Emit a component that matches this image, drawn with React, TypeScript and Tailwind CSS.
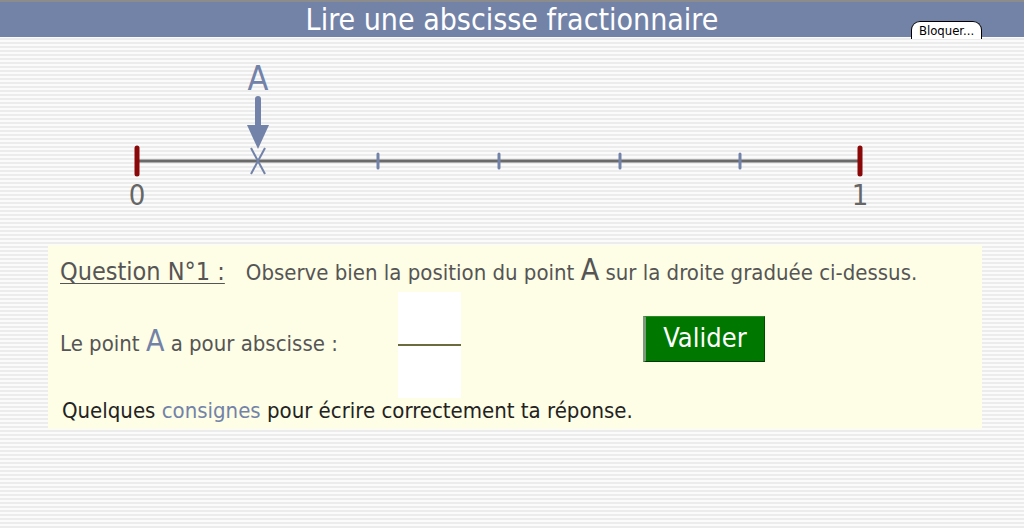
import React from "react";

const ticks = [378, 499, 620, 740];
const font = "'DejaVu Sans Condensed', 'DejaVu Sans', sans-serif";

const NumberLine = () => (
  <svg width="1024" height="208" viewBox="0 36 1024 208" className="block">
    {/* point A label and arrow */}
    <text x="258" y="89" textAnchor="middle" fontSize="34" fill="#7282a8" fontFamily={font}>
      A
    </text>
    <line x1="258" y1="98" x2="258" y2="128" stroke="#7282a8" strokeWidth="6" strokeLinecap="round" />
    <polygon points="247,124 269,124 258,148" fill="#7282a8" />

    {/* axis */}
    <line x1="137" y1="160" x2="860" y2="160" stroke="#6a6a6a" strokeWidth="3" />
    {ticks.map((x) => (
      <line key={x} x1={x} y1="153" x2={x} y2="167" stroke="#7282a8" strokeWidth="3" strokeLinecap="round" />
    ))}
    {/* cross at A */}
    <line x1="251" y1="147" x2="265" y2="173" stroke="#7282a8" strokeWidth="2" />
    <line x1="265" y1="147" x2="251" y2="173" stroke="#7282a8" strokeWidth="2" />

    {/* ends */}
    <line x1="137" y1="147" x2="137" y2="173" stroke="#8a0808" strokeWidth="5" strokeLinecap="round" />
    <line x1="860" y1="147" x2="860" y2="173" stroke="#8a0808" strokeWidth="5" strokeLinecap="round" />
    <text x="137" y="204" textAnchor="middle" fontSize="29" fill="#666" fontFamily={font}>
      0
    </text>
    <text x="860" y="204" textAnchor="middle" fontSize="29" fill="#666" fontFamily={font}>
      1
    </text>
  </svg>
);

export default function App() {
  return (
    <div className="relative h-[528px] w-[1024px] overflow-hidden bg-[repeating-linear-gradient(to_bottom,#fbfbfb_0px,#fbfbfb_2px,#ececec_2px,#ececec_4px)] font-['DejaVu_Sans_Condensed','DejaVu_Sans',sans-serif] font-stretch-condensed">
      {/* header */}
      <div className="relative flex h-[37px] items-center justify-center border-t-2 border-[#8c8c8c] bg-[#7383a7]">
        <h1 className="text-[30px] leading-none text-white">Lire une abscisse fractionnaire</h1>
        <button className="absolute left-[911px] top-[19px] h-[18px] w-[71px] rounded-t-[9px] border border-b-0 border-black bg-white text-[13px] leading-[16px] text-black">
          Bloquer...
        </button>
      </div>

      <NumberLine />

      {/* question panel */}
      <div className="ml-[48px] flex h-[184px] w-[934px] flex-col bg-[#fefde5] pl-[12px] text-[22px] text-[#555]">
        <div className="mt-[10px] flex h-[30px] items-baseline">
          <span className="text-[25px] leading-[30px] underline decoration-1 underline-offset-[3px]">Question N°1 :</span>
          <span className="ml-[21px] leading-[30px]">
            Observe bien la position du point <span className="text-[30px] leading-none">A</span> sur la droite graduée ci-dessus.
          </span>
        </div>

        <div className="mt-[7px] flex h-[106px] items-start">
          <span className="mt-[34px] w-[338px] leading-[30px]">
            Le point <span className="text-[30px] leading-none text-[#7282a8]">A</span> a pour abscisse :
          </span>
          <div className="flex h-[106px] w-[63px] flex-col justify-center bg-white">
            <div className="h-[2px] bg-[#6b6b3e]" />
          </div>
          <button className="ml-[182px] mt-[24px] h-[46px] w-[122px] border-t border-r border-b border-l-[3px] border-t-[#2c8a2c] border-r-[#004d00] border-b-[#003800] border-l-[#7a9a7a] bg-[#007800] pb-[4px] text-[27px] leading-none text-white">
            Valider
          </button>
        </div>

        <div className="ml-[2px] leading-[26px] text-[#222]">
          Quelques <span className="text-[#7282a8]">consignes</span> pour écrire correctement ta réponse.
        </div>
      </div>
    </div>
  );
}
